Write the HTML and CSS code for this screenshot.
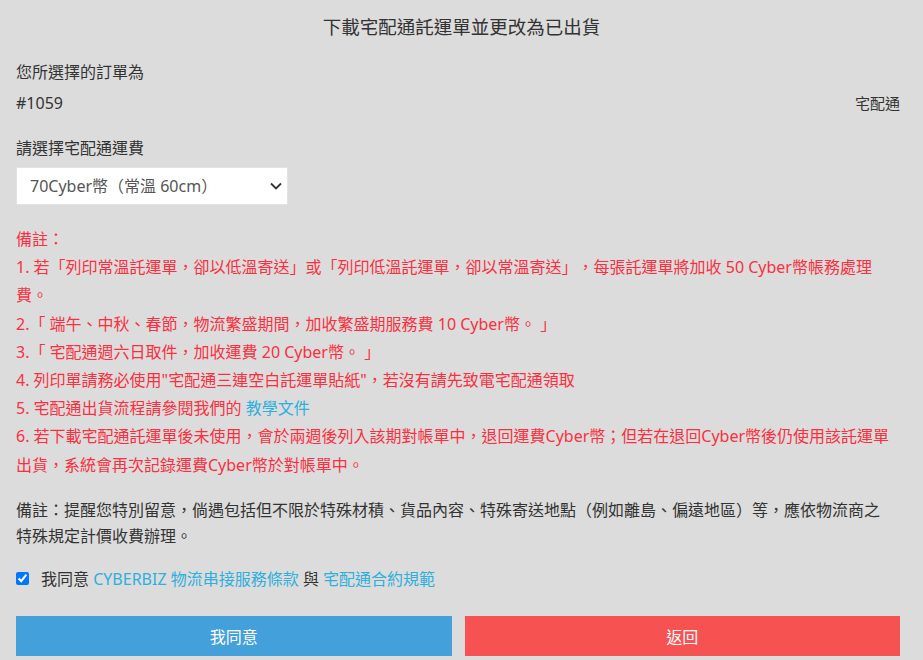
FILE: index.html
```html
<!DOCTYPE html>
<html lang="zh-Hant">
<head>
  <meta charset="UTF-8" />
  <meta name="viewport" content="width=device-width, initial-scale=1.0"/>
  <title>下載宅配通託運單</title>
  <link rel="stylesheet" href="styles.css">
</head>
<body>
  <div class="modal">
    <div class="modal-title">下載宅配通託運單並更改為已出貨</div>

    <div class="modal-body">
      <div class="field-label">您所選擇的訂單為</div>
      <div class="order-row">
        <span>#1059</span>
        <span>宅配通</span>
      </div>

      <div class="field-label fee-label">請選擇宅配通運費</div>
      <div class="select-wrap">
        <select class="fee-select">
          <option>70Cyber幣（常溫 60cm）</option>
          <option>90Cyber幣（常溫 90cm）</option>
          <option>110Cyber幣（常溫 120cm）</option>
        </select>
        <svg class="chevron" width="12" height="8" viewBox="0 0 12 8"><path d="M1 1.5l5 5 5-5" fill="none" stroke="#333" stroke-width="1.8"/></svg>
      </div>

      <div class="notes">
        <p>備註：</p>
        <p>1. 若「列印常溫託運單，卻以低溫寄送」或「列印低溫託運單，卻以常溫寄送」，每張託運單將加收 50 Cyber幣帳務處理費。</p>
        <p>2.「 端午、中秋、春節，物流繁盛期間，加收繁盛期服務費 10 Cyber幣。 」</p>
        <p>3.「 宅配通週六日取件，加收運費 20 Cyber幣。 」</p>
        <p>4. 列印單請務必使用"宅配通三連空白託運單貼紙"，若沒有請先致電宅配通領取</p>
        <p>5. 宅配通出貨流程請參閱我們的 <a href="#">教學文件</a></p>
        <p>6. 若下載宅配通託運單後未使用，會於兩週後列入該期對帳單中，退回運費Cyber幣；但若在退回Cyber幣後仍使用該託運單出貨，系統會再次記錄運費Cyber幣於對帳單中。</p>
      </div>

      <p class="remark">備註：提醒您特別留意，倘遇包括但不限於特殊材積、貨品內容、特殊寄送地點（例如離島、偏遠地區）等，應依物流商之特殊規定計價收費辦理。</p>

      <label class="agree">
        <input type="checkbox" checked>
        <span>我同意 <a href="#">CYBERBIZ 物流串接服務條款</a> 與 <a href="#">宅配通合約規範</a></span>
      </label>

      <div class="actions">
        <button class="btn btn-agree">我同意</button>
        <button class="btn btn-back">返回</button>
      </div>
    </div>
  </div>
</body>
</html>
```

FILE: styles.css
```css
body {
  margin: 0;
  background: #dcdcdc;
  font-family: "Noto Sans", "Noto Sans CJK TC", sans-serif;
  color: #333;
  font-size: 16px;
  text-spacing-trim: space-all;
}
.modal {
  width: 923px;
}
.modal-title {
  text-align: center;
  font-size: 18.5px;
  line-height: 24px;
  padding: 15px 0;
  color: #333;
}
.modal-body {
  padding: 6px 23px 0 16px;
}
.field-label {
  line-height: 24px;
}
.order-row {
  display: flex;
  justify-content: space-between;
  margin-top: 7px;
  line-height: 24px;
}
.order-row span:last-child {
  font-size: 15px;
}
.fee-label {
  margin-top: 21px;
}
.select-wrap {
  position: relative;
  width: 272px;
  margin-top: 7px;
}
.fee-select {
  appearance: none;
  -webkit-appearance: none;
  width: 272px;
  height: 38px;
  padding: 0 30px 0 13px;
  border: 1px solid #e3e3e3;
  background: #fff;
  color: #555;
  font-family: inherit;
  font-size: 16px;
  border-radius: 0;
  text-spacing-trim: space-all;
}
.chevron {
  position: absolute;
  right: 6px;
  top: 15px;
  pointer-events: none;
}
.notes {
  margin-top: 20px;
  color: #f9303f;
  line-height: 28.2px;
}
.notes p {
  margin: 0;
}
a {
  color: #2eafdc;
  text-decoration: none;
}
.remark {
  margin: 18px 10px 0 0;
  line-height: 26px;
}
.agree {
  display: flex;
  align-items: center;
  gap: 12px;
  margin-top: 17px;
  line-height: 26px;
}
.agree input {
  margin: 0;
  width: 13px;
  height: 13px;
}
.actions {
  display: flex;
  gap: 13px;
  margin-top: 24px;
}
.btn {
  flex: 1;
  height: 40px;
  border: none;
  color: #fff;
  font-family: inherit;
  font-size: 16px;
  cursor: pointer;
}
.btn-agree {
  background: #43a0da;
}
.btn-back {
  background: #f75252;
}
```
